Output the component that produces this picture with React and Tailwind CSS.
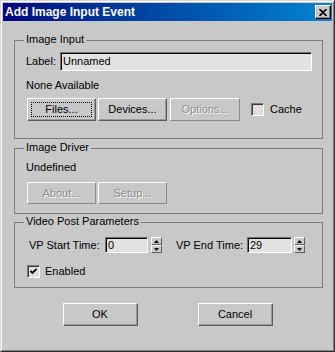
import React from "react";

function Btn({ className = "", disabled, focus, children }) {
  return (
    <div
      className={
        "flex items-center justify-center border border-t-white border-l-white border-b-[#5c5c5c] border-r-[#5c5c5c] shadow-[inset_-1px_-1px_0_#9a9a9a] " +
        (disabled ? "text-[#8c8c8c] [text-shadow:1px_1px_0_#ffffff] " : "text-black ") +
        className
      }
    >
      {focus ? (
        <div className="w-[calc(100%-6px)] h-[calc(100%-6px)] border border-dotted border-black flex items-center justify-center">
          {children}
        </div>
      ) : (
        children
      )}
    </div>
  );
}

function Group({ title, className = "", children }) {
  return (
    <div className={"relative ml-[11px] w-[309px] border border-[#7c7c7c] flex flex-col " + className}>
      <div className="absolute -top-[8px] left-[9px] px-[2px] bg-[#c8c8c8] leading-[13px]">{title}</div>
      {children}
    </div>
  );
}

function Input({ className = "", children }) {
  return (
    <div
      className={
        "bg-[#e2e2e2] border border-t-[#707070] border-l-[#707070] border-b-white border-r-white shadow-[inset_1px_1px_0_#000000] pl-[2px] flex items-center " +
        className
      }
    >
      {children}
    </div>
  );
}

function Spinner() {
  const half =
    "flex-1 flex items-center justify-center border border-t-white border-l-white border-b-[#606060] border-r-[#606060]";
  return (
    <div className="w-[11px] h-[16px] flex flex-col">
      <div className={half}>
        <svg width="5" height="3" viewBox="0 0 5 3">
          <path d="M2.5 0 L5 3 L0 3 Z" fill="#000" />
        </svg>
      </div>
      <div className={half}>
        <svg width="5" height="3" viewBox="0 0 5 3">
          <path d="M0 0 L5 0 L2.5 3 Z" fill="#000" />
        </svg>
      </div>
    </div>
  );
}

function Check({ checked }) {
  return (
    <div className="w-[13px] h-[13px] bg-[#e0e0e0] border border-t-[#7a7a7a] border-l-[#7a7a7a] border-b-white border-r-white shadow-[inset_1px_1px_0_#3a3a3a] flex items-center justify-center">
      {checked && (
        <svg width="7" height="7" viewBox="0 0 7 7">
          <path d="M0.5 3 L2.5 5 L6.5 1" stroke="#000" strokeWidth="1.8" fill="none" />
        </svg>
      )}
    </div>
  );
}

export default function App() {
  return (
    <div className="w-[335px] h-[352px] bg-[#c8c8c8] border border-t-[#d8d8d8] border-l-[#d8d8d8] border-b-[#303030] border-r-[#303030] font-['Liberation_Sans',Arial,sans-serif] text-[11px] leading-[13px] text-black">
      <div className="h-full border border-t-white border-l-white border-b-[#808080] border-r-[#808080] p-px flex flex-col">
        <div className="h-[18px] flex items-center pl-[2px] pr-px bg-gradient-to-r from-[#000080] to-[#1084d0]">
          <span className="text-white font-bold text-[12px] leading-[14px]">Add Image Input Event</span>
          <div className="ml-auto w-[16px] h-[14px] bg-[#c8c8c8] border border-t-white border-l-white border-b-black border-r-black shadow-[inset_-1px_-1px_0_#808080] flex items-center justify-center">
            <svg width="8" height="7" viewBox="0 0 8 7">
              <path d="M0.5 0 L7.5 7 M7.5 0 L0.5 7" stroke="#000" strokeWidth="1.6" />
            </svg>
          </div>
        </div>

        <Group title="Image Input" className="mt-[19px] h-[99px]">
          <div className="mt-[11px] flex items-center h-[19px]">
            <span className="pl-[11px] w-[45px]">Label:</span>
            <Input className="w-[252px] h-[19px]">Unnamed</Input>
          </div>
          <div className="mt-[8px] pl-[11px]">None Available</div>
          <div className="mt-[6px] pl-[12px] flex items-center h-[23px]">
            <Btn focus className="w-[69px] h-[23px]">Files...</Btn>
            <Btn className="ml-[2px] w-[69px] h-[23px]">Devices...</Btn>
            <Btn disabled className="ml-[3px] w-[70px] h-[23px] border-b-[#8a8a8a] border-r-[#8a8a8a] shadow-none">Options...</Btn>
            <div className="ml-[11px]">
              <Check />
            </div>
            <span className="ml-[6px]">Cache</span>
          </div>
        </Group>

        <Group title="Image Driver" className="mt-[9px] h-[66px]">
          <div className="mt-[12px] pl-[11px]">Undefined</div>
          <div className="mt-[8px] pl-[12px] flex items-center h-[22px]">
            <Btn disabled className="w-[69px] h-[22px] border-b-[#8a8a8a] border-r-[#8a8a8a] shadow-none">About...</Btn>
            <Btn disabled className="ml-[2px] w-[69px] h-[22px] border-b-[#8a8a8a] border-r-[#8a8a8a] shadow-none">Setup...</Btn>
          </div>
        </Group>

        <Group title="Video Post Parameters" className="mt-[8px] h-[66px]">
          <div className="mt-[14px] flex items-center h-[16px]">
            <span className="pl-[14px] w-[90px]">VP Start Time:</span>
            <Input className="w-[43px] h-[16px]">0</Input>
            <div className="ml-[3px]">
              <Spinner />
            </div>
            <span className="ml-[14px] w-[71px]">VP End Time:</span>
            <Input className="w-[45px] h-[16px]">29</Input>
            <div className="ml-[2px]">
              <Spinner />
            </div>
          </div>
          <div className="mt-[12px] pl-[12px] flex items-center">
            <Check checked />
            <span className="ml-[5px]">Enabled</span>
          </div>
        </Group>

        <div className="mt-[15px] flex justify-center gap-[60px]">
          <Btn className="w-[75px] h-[23px]">OK</Btn>
          <Btn className="w-[75px] h-[23px]">Cancel</Btn>
        </div>
      </div>
    </div>
  );
}
